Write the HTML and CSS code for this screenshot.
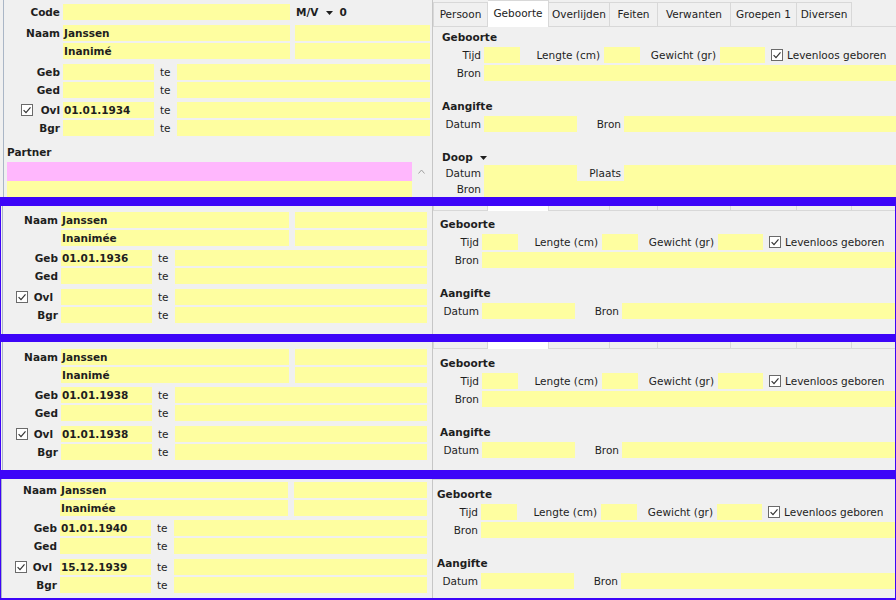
FILE: index.html
```html
<!DOCTYPE html>
<html lang="nl">
<head>
<meta charset="utf-8">
<title>Geboorte</title>
<link rel="stylesheet" href="styles.css">
</head>
<body>
<main class="screen">

  <!-- Panel 1 -->
  <section class="panel p1">
    <div class="left">
      <div class="row">
        <span class="lbl">Code</span>
        <span class="fld w-name"></span>
        <span class="mv">M/V<svg class="tri" width="7" height="4" viewBox="0 0 7 4"><path d="M0 0H7L3.5 4Z"/></svg>0</span>
      </div>
      <div class="row gap5">
        <span class="lbl">Naam</span>
        <span class="fld w-name">Janssen</span>
        <span class="fld grow second"></span>
      </div>
      <div class="row">
        <span class="lbl"></span>
        <span class="fld w-name">Inanimé</span>
        <span class="fld grow second"></span>
      </div>
      <div class="row gap5">
        <span class="lbl">Geb</span>
        <span class="fld w-date"></span>
        <span class="te">te</span>
        <span class="fld grow"></span>
      </div>
      <div class="row">
        <span class="lbl">Ged</span>
        <span class="fld w-date"></span>
        <span class="te">te</span>
        <span class="fld grow"></span>
      </div>
      <div class="row gap4">
        <span class="lbl ovl"><svg class="cb" width="12" height="12" viewBox="0 0 12 12"><rect x="0.5" y="0.5" width="11" height="11"/><path d="M2.6 6.1 L5 8.6 L9.5 3.4"/></svg><span class="ovl-t">Ovl</span></span>
        <span class="fld w-date">01.01.1934</span>
        <span class="te">te</span>
        <span class="fld grow"></span>
      </div>
      <div class="row">
        <span class="lbl">Bgr</span>
        <span class="fld w-date"></span>
        <span class="te">te</span>
        <span class="fld grow"></span>
      </div>
      <div class="partner-hd">Partner</div>
      <div class="plist">
        <div class="plist-rows">
          <div class="prow pink"></div>
          <div class="prow yel"></div>
        </div>
        <div class="pscroll"><svg width="7" height="5" viewBox="0 0 7 5"><path d="M0.5 4.5 L3.5 1 L6.5 4.5"/></svg></div>
      </div>
    </div>
    <div class="right">
      <div class="tabs">
        <span class="tab t1">Persoon</span>
        <span class="tab sel t2">Geboorte</span>
        <span class="tab t3">Overlijden</span>
        <span class="tab t4">Feiten</span>
        <span class="tab t5">Verwanten</span>
        <span class="tab t6">Groepen 1</span>
        <span class="tab t7">Diversen</span>
        <span class="fill"></span>
      </div>
      <div class="content">
        <div class="hd">Geboorte</div>
        <div class="rrow">
          <span class="rl">Tijd</span><span class="fld w-s"></span>
          <span class="rl2 w-len">Lengte (cm)</span><span class="fld w-s"></span>
          <span class="rl2 w-gew">Gewicht (gr)</span><span class="fld w-m"></span>
          <svg class="cb rcb" width="12" height="12" viewBox="0 0 12 12"><rect x="0.5" y="0.5" width="11" height="11"/><path d="M2.6 6.1 L5 8.6 L9.5 3.4"/></svg>
          <span class="cbl">Levenloos geboren</span>
        </div>
        <div class="rrow"><span class="rl">Bron</span><span class="fld grow"></span></div>
        <div class="hd sec">Aangifte</div>
        <div class="rrow"><span class="rl">Datum</span><span class="fld w-d"></span><span class="rl2 w-br">Bron</span><span class="fld grow"></span></div>
        <div class="hd sec">Doop<svg class="tri" width="7" height="4" viewBox="0 0 7 4"><path d="M0 0H7L3.5 4Z"/></svg></div>
        <div class="rrow tight"><span class="rl">Datum</span><span class="fld w-d"></span><span class="rl2 w-br">Plaats</span><span class="fld grow"></span></div>
        <div class="rrow tight"><span class="rl">Bron</span><span class="fld grow"></span></div>
      </div>
    </div>
  </section>
  <div class="bar bar-9"></div>

  <!-- Panel 2 -->
  <section class="panel p2 framed">
    <div class="left">
      <div class="row">
        <span class="lbl">Naam</span>
        <span class="fld w-name">Janssen</span>
        <span class="fld grow second"></span>
      </div>
      <div class="row">
        <span class="lbl"></span>
        <span class="fld w-name">Inanimée</span>
        <span class="fld grow second"></span>
      </div>
      <div class="row gap4">
        <span class="lbl">Geb</span>
        <span class="fld w-date">01.01.1936</span>
        <span class="te">te</span>
        <span class="fld grow"></span>
      </div>
      <div class="row">
        <span class="lbl">Ged</span>
        <span class="fld w-date"></span>
        <span class="te">te</span>
        <span class="fld grow"></span>
      </div>
      <div class="row gap5">
        <span class="lbl ovl"><svg class="cb" width="12" height="12" viewBox="0 0 12 12"><rect x="0.5" y="0.5" width="11" height="11"/><path d="M2.6 6.1 L5 8.6 L9.5 3.4"/></svg><span class="ovl-t">Ovl</span></span>
        <span class="fld w-date"></span>
        <span class="te">te</span>
        <span class="fld grow"></span>
      </div>
      <div class="row">
        <span class="lbl">Bgr</span>
        <span class="fld w-date"></span>
        <span class="te">te</span>
        <span class="fld grow"></span>
      </div>
    </div>
    <div class="right">
      <div class="tabs strip s5">
        <span class="tab t1"></span>
        <span class="tab sel t2"></span>
        <span class="tab t3"></span>
        <span class="tab t4"></span>
        <span class="tab t5"></span>
        <span class="tab t6"></span>
        <span class="tab t7"></span>
        <span class="fill"></span>
      </div>
      <div class="content">
        <div class="hd">Geboorte</div>
        <div class="rrow">
          <span class="rl">Tijd</span><span class="fld w-s"></span>
          <span class="rl2 w-len">Lengte (cm)</span><span class="fld w-s"></span>
          <span class="rl2 w-gew">Gewicht (gr)</span><span class="fld w-m"></span>
          <svg class="cb rcb" width="12" height="12" viewBox="0 0 12 12"><rect x="0.5" y="0.5" width="11" height="11"/><path d="M2.6 6.1 L5 8.6 L9.5 3.4"/></svg>
          <span class="cbl">Levenloos geboren</span>
        </div>
        <div class="rrow"><span class="rl">Bron</span><span class="fld grow"></span></div>
        <div class="hd sec">Aangifte</div>
        <div class="rrow"><span class="rl">Datum</span><span class="fld w-d"></span><span class="rl2 w-br">Bron</span><span class="fld grow"></span></div>
      </div>
    </div>
  </section>
  <div class="bar bar-8"></div>

  <!-- Panel 3 -->
  <section class="panel p3 framed">
    <div class="left">
      <div class="row">
        <span class="lbl">Naam</span>
        <span class="fld w-name">Janssen</span>
        <span class="fld grow second"></span>
      </div>
      <div class="row">
        <span class="lbl"></span>
        <span class="fld w-name">Inanimé</span>
        <span class="fld grow second"></span>
      </div>
      <div class="row gap4">
        <span class="lbl">Geb</span>
        <span class="fld w-date">01.01.1938</span>
        <span class="te">te</span>
        <span class="fld grow"></span>
      </div>
      <div class="row">
        <span class="lbl">Ged</span>
        <span class="fld w-date"></span>
        <span class="te">te</span>
        <span class="fld grow"></span>
      </div>
      <div class="row gap5">
        <span class="lbl ovl"><svg class="cb" width="12" height="12" viewBox="0 0 12 12"><rect x="0.5" y="0.5" width="11" height="11"/><path d="M2.6 6.1 L5 8.6 L9.5 3.4"/></svg><span class="ovl-t">Ovl</span></span>
        <span class="fld w-date">01.01.1938</span>
        <span class="te">te</span>
        <span class="fld grow"></span>
      </div>
      <div class="row">
        <span class="lbl">Bgr</span>
        <span class="fld w-date"></span>
        <span class="te">te</span>
        <span class="fld grow"></span>
      </div>
    </div>
    <div class="right">
      <div class="tabs strip s7">
        <span class="tab t1"></span>
        <span class="tab sel t2"></span>
        <span class="tab t3"></span>
        <span class="tab t4"></span>
        <span class="tab t5"></span>
        <span class="tab t6"></span>
        <span class="tab t7"></span>
        <span class="fill"></span>
      </div>
      <div class="content">
        <div class="hd">Geboorte</div>
        <div class="rrow">
          <span class="rl">Tijd</span><span class="fld w-s"></span>
          <span class="rl2 w-len">Lengte (cm)</span><span class="fld w-s"></span>
          <span class="rl2 w-gew">Gewicht (gr)</span><span class="fld w-m"></span>
          <svg class="cb rcb" width="12" height="12" viewBox="0 0 12 12"><rect x="0.5" y="0.5" width="11" height="11"/><path d="M2.6 6.1 L5 8.6 L9.5 3.4"/></svg>
          <span class="cbl">Levenloos geboren</span>
        </div>
        <div class="rrow"><span class="rl">Bron</span><span class="fld grow"></span></div>
        <div class="hd sec">Aangifte</div>
        <div class="rrow"><span class="rl">Datum</span><span class="fld w-d"></span><span class="rl2 w-br">Bron</span><span class="fld grow"></span></div>
      </div>
    </div>
  </section>
  <div class="bar bar-9"></div>

  <!-- Panel 4 -->
  <section class="panel p4 framed">
    <div class="left">
      <div class="row">
        <span class="lbl">Naam</span>
        <span class="fld w-name">Janssen</span>
        <span class="fld grow second"></span>
      </div>
      <div class="row">
        <span class="lbl"></span>
        <span class="fld w-name">Inanimée</span>
        <span class="fld grow second"></span>
      </div>
      <div class="row gap4">
        <span class="lbl">Geb</span>
        <span class="fld w-date">01.01.1940</span>
        <span class="te">te</span>
        <span class="fld grow"></span>
      </div>
      <div class="row">
        <span class="lbl">Ged</span>
        <span class="fld w-date"></span>
        <span class="te">te</span>
        <span class="fld grow"></span>
      </div>
      <div class="row gap5">
        <span class="lbl ovl"><svg class="cb" width="12" height="12" viewBox="0 0 12 12"><rect x="0.5" y="0.5" width="11" height="11"/><path d="M2.6 6.1 L5 8.6 L9.5 3.4"/></svg><span class="ovl-t">Ovl</span></span>
        <span class="fld w-date">15.12.1939</span>
        <span class="te">te</span>
        <span class="fld grow"></span>
      </div>
      <div class="row">
        <span class="lbl">Bgr</span>
        <span class="fld w-date"></span>
        <span class="te">te</span>
        <span class="fld grow"></span>
      </div>
    </div>
    <div class="right">
      <div class="content">
        <div class="hd">Geboorte</div>
        <div class="rrow">
          <span class="rl">Tijd</span><span class="fld w-s"></span>
          <span class="rl2 w-len">Lengte (cm)</span><span class="fld w-s"></span>
          <span class="rl2 w-gew">Gewicht (gr)</span><span class="fld w-m"></span>
          <svg class="cb rcb" width="12" height="12" viewBox="0 0 12 12"><rect x="0.5" y="0.5" width="11" height="11"/><path d="M2.6 6.1 L5 8.6 L9.5 3.4"/></svg>
          <span class="cbl">Levenloos geboren</span>
        </div>
        <div class="rrow"><span class="rl">Bron</span><span class="fld grow"></span></div>
        <div class="hd sec">Aangifte</div>
        <div class="rrow"><span class="rl">Datum</span><span class="fld w-d"></span><span class="rl2 w-br">Bron</span><span class="fld grow"></span></div>
      </div>
    </div>
  </section>
  <div class="bar bar-2"></div>

</main>
</body>
</html>
```

FILE: styles.css
```css
* { box-sizing: border-box; }

html, body {
  margin: 0;
  padding: 0;
}

body {
  width: 896px;
  height: 600px;
  overflow: hidden;
  background: #3d05f8;
  font-family: "DejaVu Sans", "Liberation Sans", sans-serif;
  font-size: 10.5px;
  color: #1e1e1e;
}

.screen {
  display: flex;
  flex-direction: column;
  height: 600px;
}

.bar { flex: 0 0 auto; background: #3d05f8; }
.bar-9 { height: 9px; }
.bar-8 { height: 8px; }
.bar-2 { height: 2px; }

.panel {
  flex: 0 0 auto;
  display: flex;
  background: #f0f0f0;
  overflow: hidden;
}
.p1 { height: 197px; }
.p2, .p3 { height: 128px; }
.p4 { height: 119px; }
.framed {
  border-left: 1px solid #3d05f8;
  border-right: 1px solid #3d05f8;
}

/* ---------- left pane ---------- */
.left {
  flex: 1;
  min-width: 0;
  display: flex;
  flex-direction: column;
  border-left: 1px solid #aab6c6;
}
.p1 .left { margin-left: 3px; padding: 4px 2px 0 1px; }
.p2 .left { margin-left: 1px; padding: 6px 5px 0 0; }
.p3 .left { margin-left: 1px; padding: 7px 5px 0 0; }
.p4 .left { padding: 3px 5px 0 0; }

.row {
  display: flex;
  height: 16px;
  line-height: 16px;
  margin-top: 2px;
  flex: 0 0 auto;
}
.row:first-child { margin-top: 0; }
.row.gap4 { margin-top: 4px; }
.row.gap5 { margin-top: 5px; }

.lbl {
  flex: 0 0 55px;
  margin-right: 3px;
  text-align: right;
  font-weight: bold;
  white-space: nowrap;
}
.lbl.ovl {
  display: flex;
  justify-content: flex-end;
  align-items: center;
}
.lbl.ovl .cb { margin-right: 8px; }
.framed .lbl.ovl .cb { margin-right: 6px; }
.framed .ovl-t { padding-right: 5px; }

.fld {
  display: block;
  height: 16px;
  background: #fefea0;
  font-weight: bold;
  white-space: nowrap;
  overflow: hidden;
  padding-left: 1px;
  flex: 0 0 auto;
}
.fld.grow { flex: 1 1 auto; min-width: 0; }
.w-name { width: 228px; }
.p1 .w-name { width: 227px; }
.second { margin-left: 6px; }
.p1 .second { margin-left: 5px; }
.w-date { width: 91px; }
.te {
  flex: 0 0 23px;
  padding-left: 6px;
}

.mv {
  margin-left: 6px;
  font-weight: bold;
  display: flex;
  align-items: center;
  white-space: nowrap;
}
.tri { fill: #1e1e1e; }
.mv .tri { margin: 1px 6px 0 8px; }

.cb rect { fill: #ffffff; stroke: #6a6a6a; }
.cb path { fill: none; stroke: #333333; stroke-width: 1.2; }
.cb { flex: 0 0 auto; }

.partner-hd {
  margin-top: 8px;
  height: 16px;
  line-height: 16px;
  padding-left: 2px;
  font-weight: bold;
}
.plist {
  display: flex;
  margin-top: 2px;
  padding-left: 2px;
}
.plist-rows {
  flex: 0 0 405px;
  display: flex;
  flex-direction: column;
}
.prow { height: 16px; }
.prow.pink { height: 19px; background: #ffb7fd; }
.prow.yel { background: #fefea0; }
.pscroll {
  flex: 1;
  display: flex;
  justify-content: center;
  padding-top: 7px;
}
.pscroll path { fill: none; stroke: #a0a0a0; stroke-width: 1; }

/* ---------- right pane ---------- */
.right {
  flex: 0 0 464px;
  display: flex;
  flex-direction: column;
  border-left: 1px solid #c6c6c6;
}
.framed .right { flex-basis: 463px; }

.tabs {
  display: flex;
  align-items: flex-end;
  height: 27px;
  flex: 0 0 auto;
}
.tabs.strip { overflow: hidden; }
.tabs.s5 { height: 5px; }
.tabs.s7 { height: 7px; }

.tab {
  flex: 0 0 auto;
  height: 25px;
  line-height: 23px;
  text-align: center;
  white-space: nowrap;
  background: #f0f0f0;
  border: 1px solid #d8d8d8;
  border-left: none;
  color: #222;
}
.tab.t1 { border-left: 1px solid #d8d8d8; }
.tab.sel {
  height: 27px;
  line-height: 25px;
  background: #ffffff;
  border-bottom: none;
}
.t1 { width: 55px; }
.t2 { width: 61px; }
.t3 { width: 61px; }
.t4 { width: 48px; }
.t5 { width: 73px; }
.t6 { width: 66px; }
.t7 { width: 55px; }
.tabs .fill {
  flex: 1;
  height: 1px;
  background: #d8d8d8;
}

.content { padding-top: 2px; }
.p2 .content { padding-top: 5px; }
.p3 .content { padding-top: 6px; }
.p4 .content { padding-top: 6px; border-top: 1px solid #d4d4d4; }

.hd {
  height: 16px;
  line-height: 16px;
  font-weight: bold;
  padding-left: 9px;
  display: flex;
  align-items: center;
}
.hd .tri { margin-left: 7px; margin-top: 1px; }
.p2 .hd, .p3 .hd { padding-left: 7px; }
.p4 .hd { padding-left: 4px; }
.hd.sec { margin-top: 17px; }

.rrow {
  display: flex;
  align-items: center;
  height: 16px;
  line-height: 16px;
  margin-top: 2px;
}
.rrow.tight { margin-top: 0; }

.rl {
  flex: 0 0 48px;
  margin-right: 3px;
  text-align: right;
  white-space: nowrap;
}
.p2 .rl, .p3 .rl { flex-basis: 46px; }
.p4 .rl { flex-basis: 45px; }

.rl2 {
  flex: 0 0 auto;
  text-align: right;
  padding-right: 4px;
  white-space: nowrap;
}
.w-len { width: 84px; }
.w-gew { width: 80px; }
.w-br { width: 47px; padding-right: 3px; }

.w-s { width: 36px; }
.w-m { width: 45px; }
.w-d { width: 93px; }

.rcb { margin-left: 6px; }
.cbl { margin-left: 4px; white-space: nowrap; }
```
